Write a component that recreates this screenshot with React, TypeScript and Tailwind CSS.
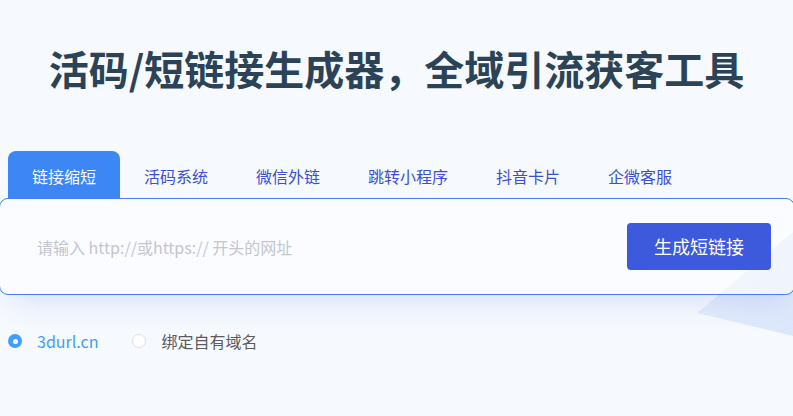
import React from "react";

const tabs = ["链接缩短", "活码系统", "微信外链", "跳转小程序", "抖音卡片", "企微客服"];

export default function App() {
  return (
    <div
      className="relative w-[793px] h-[416px] overflow-hidden bg-[#f6f9fe]"
      style={{ fontFamily: '"Noto Sans CJK SC", "Noto Sans", sans-serif' }}
    >
      <svg className="absolute left-0 top-0" width="793" height="416" viewBox="0 0 793 416">
        <defs>
          <linearGradient id="dg" x1="0" y1="0" x2="1" y2="1">
            <stop offset="0" stopColor="#e9f0fc" />
            <stop offset="1" stopColor="#dbe6fa" />
          </linearGradient>
        </defs>
        <polygon points="793,232 697,313 793,336" fill="url(#dg)" />
      </svg>

      <div className="relative">
        <h1 className="pt-[40px] text-center text-[40px] leading-[56px] font-bold text-[#2c4357]">
          活码/短链接生成器，全域引流获客工具
        </h1>

        <div className="mt-[55px] flex h-[47px] pl-[8px]">
          {tabs.map((t, i) => (
            <div
              key={t}
              className={
                i === 0
                  ? "flex items-center px-[24px] pt-[3px] rounded-t-[8px] bg-[#3d86f5] text-white text-[16px]"
                  : "flex items-center px-[24px] pt-[3px] text-[#3a4fd5] text-[16px]"
              }
            >
              {t}
            </div>
          ))}
        </div>

        <div className="ml-[-1px] w-[796px] h-[97px] rounded-[9px] border border-[#3d82f0] bg-white/50 flex items-center justify-between pl-[37px] pr-[23px] shadow-[0_18px_28px_-12px_rgba(70,110,220,0.18)]">
          <span className="text-[16px] text-[#c3c6cd] pt-[1px]">请输入 http://或https:// 开头的网址</span>
          <button className="w-[144px] h-[47px] rounded-[4px] bg-[#3d59dc] text-white text-[18px]">
            生成短链接
          </button>
        </div>

        <div className="mt-[36px] flex items-center h-[20px] text-[16px]">
          <div className="ml-[8px] w-[14px] h-[14px] rounded-full bg-[#409eff] flex items-center justify-center">
            <div className="w-[5px] h-[5px] rounded-full bg-white" />
          </div>
          <span className="ml-[15px] text-[#409eff]">3durl.cn</span>
          <div className="ml-[34px] w-[14px] h-[14px] rounded-full border border-[#dcdfe6] bg-white" />
          <span className="ml-[15px] text-[#5a5c60]">绑定自有域名</span>
        </div>
      </div>
    </div>
  );
}
